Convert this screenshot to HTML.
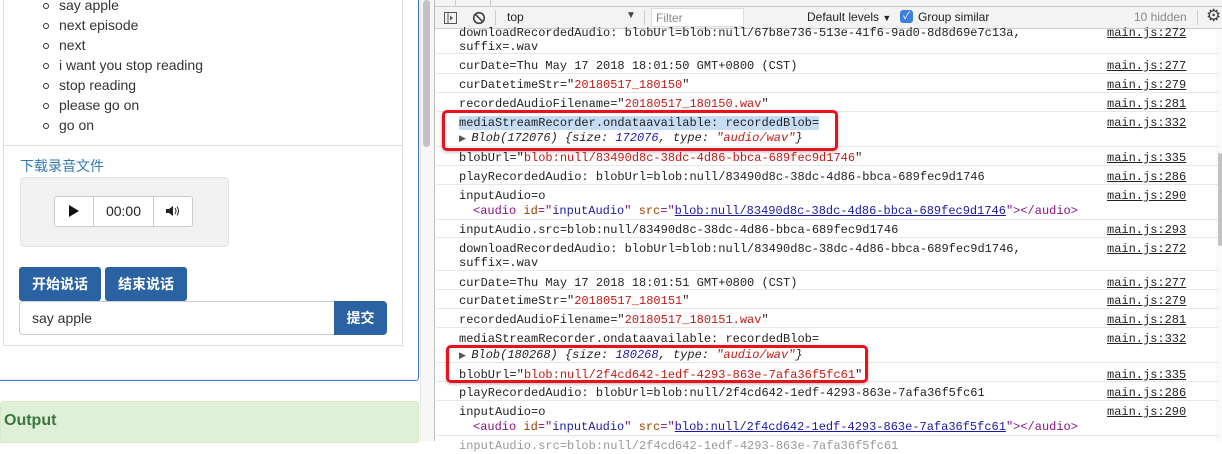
<!DOCTYPE html>
<html><head><meta charset="utf-8"><style>
*{margin:0;padding:0;box-sizing:border-box}
body{width:1222px;height:441px;overflow:hidden;background:#fff;position:relative;font-family:"Liberation Sans","Noto Sans CJK SC",sans-serif}
.a{position:absolute}
.li{position:absolute;left:59px;font-size:14px;color:#333;line-height:20px}
.bu{position:absolute;left:43px;width:6px;height:6px;border:1.3px solid #333;border-radius:50%}
.m{position:absolute;left:459px;font-family:"Liberation Mono",monospace;font-size:12px;color:#222;line-height:15px;white-space:pre;margin-top:2px}
.l{position:absolute;left:1107px;font-family:"Liberation Mono",monospace;font-size:12px;color:#222;text-decoration:underline;line-height:15px;margin-top:2px}
.h{position:absolute;left:436px;width:782px;height:1px;background:#e6e6e6}
.r{color:#c41a16}.b{color:#1a1aa6}.p{color:#881280}.o{color:#994500}.u{color:#1a1aa6;text-decoration:underline}.s{color:#1a1aa6}
.btn{position:absolute;background:#2a62a4;color:#fff;font-size:14px;font-weight:bold;text-align:center;border-radius:3px}
</style></head><body>
<div class="a" style="left:3px;top:-2px;width:400px;height:348px;border:1px solid #ddd;border-top:none"></div>
<div class="a" style="left:3px;top:145px;width:400px;height:1px;background:#ddd"></div>
<div class="a" style="left:0;top:-2px;width:419px;height:383px;border:1px solid #3a78c2;border-left:none;border-top:none;border-radius:0 0 3px 0"></div>
<div class="bu" style="top:3px"></div><div class="li" style="top:-5px">say apple</div>
<div class="bu" style="top:23px"></div><div class="li" style="top:15px">next episode</div>
<div class="bu" style="top:43px"></div><div class="li" style="top:35px">next</div>
<div class="bu" style="top:63px"></div><div class="li" style="top:55px">i want you stop reading</div>
<div class="bu" style="top:83px"></div><div class="li" style="top:75px">stop reading</div>
<div class="bu" style="top:103px"></div><div class="li" style="top:95px">please go on</div>
<div class="bu" style="top:123px"></div><div class="li" style="top:115px">go on</div>
<div class="a" style="left:20px;top:156px;font-size:14px;color:#337ab7;line-height:20px">下载录音文件</div>
<div class="a" style="left:20px;top:177px;width:209px;height:70px;background:#f1f1f1;border:1px solid #e3e3e3;border-radius:4px"></div>
<div class="a" style="left:54px;top:196px;width:139px;height:31px;background:#fff;border:1px solid #ccc;border-radius:3px"></div>
<div class="a" style="left:93px;top:197px;width:1px;height:29px;background:#ccc"></div>
<div class="a" style="left:153px;top:197px;width:1px;height:29px;background:#ccc"></div>
<svg class="a" style="left:68px;top:204px" width="12" height="14"><path d="M1 1L11 7L1 13Z" fill="#111"/></svg>
<div class="a" style="left:94px;top:203px;width:59px;text-align:center;font-size:14px;color:#222">00:00</div>
<svg class="a" style="left:166px;top:205px" width="14" height="12"><path d="M0 4H3L7 1V11L3 8H0Z" fill="#222"/><path d="M9 3Q11 6 9 9M11 1.5Q14 6 11 10.5" stroke="#222" fill="none" stroke-width="1"/></svg>
<div class="btn" style="left:19px;top:267px;width:82px;height:34px;line-height:34px">开始说话</div>
<div class="btn" style="left:105px;top:267px;width:82px;height:34px;line-height:34px">结束说话</div>
<div class="a" style="left:19px;top:301px;width:316px;height:34px;border:1px solid #ccc;border-radius:4px 0 0 4px;font-size:14px;color:#333;padding-left:12px;line-height:32px">say apple</div>
<div class="btn" style="left:334px;top:301px;width:53px;height:34px;line-height:34px;border-radius:0 4px 4px 0">提交</div>
<div class="a" style="left:0;top:401px;width:419px;height:42px;background:#dff0d8;border:1px solid #d6e9c6;border-radius:4px 4px 0 0"></div>
<div class="a" style="left:4px;top:412px;font-size:16px;font-weight:bold;color:#3c763d">Output</div>
<div class="a" style="left:420px;top:0;width:15px;height:441px;background:#f7f7f7;border-left:1px solid #e8e8e8"></div>
<div class="a" style="left:423px;top:0;width:7px;height:147px;background:#c2c2c2;border-radius:4px"></div>
<div class="a" style="left:434px;top:0;width:1px;height:441px;background:#bbb"></div>
<div class="a" style="left:435px;top:0;width:787px;height:7px;background:#f3f3f3;border-bottom:1px solid #ccc"></div>
<div class="a" style="left:455px;top:0;width:1px;height:7px;background:#ccc"></div>
<div class="a" style="left:490px;top:0;width:1px;height:7px;background:#ccc"></div>
<div class="a" style="left:435px;top:7px;width:787px;height:22px;background:#f3f3f3;border-bottom:1px solid #ccc"></div>
<svg class="a" style="left:443px;top:10px" width="16" height="16"><rect x="1.5" y="2.5" width="12" height="11" fill="none" stroke="#555"/><line x1="5" y1="3" x2="5" y2="13" stroke="#555"/><path d="M7 5.5L10 8L7 10.5Z" fill="#555"/></svg>
<svg class="a" style="left:472px;top:10px" width="16" height="16"><circle cx="7" cy="8" r="5.3" fill="none" stroke="#444" stroke-width="1.6"/><line x1="3.3" y1="4.3" x2="10.7" y2="11.7" stroke="#444" stroke-width="1.6"/></svg>
<div class="a" style="left:495px;top:10px;width:1px;height:15px;background:#ccc"></div>
<div class="a" style="left:507px;top:10px;font-size:12px;color:#222">top</div>
<div class="a" style="left:626px;top:10px;font-size:10px;color:#444">▼</div>
<div class="a" style="left:644px;top:10px;width:1px;height:15px;background:#ccc"></div>
<div class="a" style="left:651px;top:8px;width:93px;height:19px;background:#fff;border:1px solid #ddd;font-size:12px;color:#888;padding:2px 4px">Filter</div>
<div class="a" style="left:807px;top:10px;font-size:12px;color:#222">Default levels <span style="font-size:9px">▼</span></div>
<div class="a" style="left:900px;top:10px;width:13px;height:13px;background:#3b7fe0;border-radius:3px;color:#fff;font-size:10px;text-align:center;line-height:13px">✓</div>
<div class="a" style="left:918px;top:10px;font-size:12px;color:#222">Group similar</div>
<div class="a" style="left:1134px;top:10px;font-size:12px;color:#888">10 hidden</div>
<div class="a" style="left:1197px;top:10px;width:1px;height:15px;background:#ccc"></div>
<div class="a" style="left:1206px;top:6px;font-size:17px;color:#444">⚙</div>
<div class="a" style="left:1216px;top:29px;width:6px;height:412px;background:#fafafa"></div>
<div class="a" style="left:1218px;top:153px;width:4px;height:93px;background:#c2c2c2;border-radius:2px"></div>
<div class="m" style="top:24px">downloadRecordedAudio: blobUrl=blob:null/67b8e736-513e-41f6-9ad0-8d8d69e7c13a,</div><div class="l" style="top:24px">main.js:272</div>
<div class="m" style="top:38px">suffix=.wav</div>
<div class="h" style="top:53px"></div>
<div class="m" style="top:57px">curDate=Thu May 17 2018 18:01:50 GMT+0800 (CST)</div><div class="l" style="top:57px">main.js:277</div>
<div class="h" style="top:73px"></div>
<div class="m" style="top:76px">curDatetimeStr="<span class="r">20180517_180150</span>"</div><div class="l" style="top:76px">main.js:279</div>
<div class="h" style="top:92px"></div>
<div class="m" style="top:95px">recordedAudioFilename="<span class="r">20180517_180150.wav</span>"</div><div class="l" style="top:95px">main.js:281</div>
<div class="h" style="top:111px"></div>
<div class="m" style="top:114px"><span style="background:#c6dcf5">mediaStreamRecorder.ondataavailable: recordedBlob=</span></div><div class="l" style="top:114px">main.js:332</div>
<div class="m" style="top:129px"><span style="font-size:9px;color:#555">▶ </span><i>Blob(172076) {size: <span class="b">172076</span>, type: <span class="r">"audio/wav"</span>}</i></div>
<div class="h" style="top:146px"></div>
<div class="m" style="top:149px">blobUrl="<span class="r">blob:null/83490d8c-38dc-4d86-bbca-689fec9d1746</span>"</div><div class="l" style="top:149px">main.js:335</div>
<div class="h" style="top:165px"></div>
<div class="m" style="top:168px">playRecordedAudio: blobUrl=blob:null/83490d8c-38dc-4d86-bbca-689fec9d1746</div><div class="l" style="top:168px">main.js:286</div>
<div class="h" style="top:184px"></div>
<div class="m" style="top:187px">inputAudio=o</div><div class="l" style="top:187px">main.js:290</div>
<div class="m" style="top:202px;left:473px"><span class="p">&lt;audio</span> <span class="o">id</span><span class="p">="</span><span class="s">inputAudio</span><span class="p">"</span> <span class="o">src</span><span class="p">="</span><span class="u">blob:null/83490d8c-38dc-4d86-bbca-689fec9d1746</span><span class="p">"&gt;&lt;/audio&gt;</span></div>
<div class="h" style="top:219px"></div>
<div class="m" style="top:221px">inputAudio.src=blob:null/83490d8c-38dc-4d86-bbca-689fec9d1746</div><div class="l" style="top:221px">main.js:293</div>
<div class="h" style="top:237px"></div>
<div class="m" style="top:240px">downloadRecordedAudio: blobUrl=blob:null/83490d8c-38dc-4d86-bbca-689fec9d1746,</div><div class="l" style="top:240px">main.js:272</div>
<div class="m" style="top:254px">suffix=.wav</div>
<div class="h" style="top:270px"></div>
<div class="m" style="top:274px">curDate=Thu May 17 2018 18:01:51 GMT+0800 (CST)</div><div class="l" style="top:274px">main.js:277</div>
<div class="h" style="top:289px"></div>
<div class="m" style="top:292px">curDatetimeStr="<span class="r">20180517_180151</span>"</div><div class="l" style="top:292px">main.js:279</div>
<div class="h" style="top:308px"></div>
<div class="m" style="top:311px">recordedAudioFilename="<span class="r">20180517_180151.wav</span>"</div><div class="l" style="top:311px">main.js:281</div>
<div class="h" style="top:327px"></div>
<div class="m" style="top:330px">mediaStreamRecorder.ondataavailable: recordedBlob=</div><div class="l" style="top:330px">main.js:332</div>
<div class="m" style="top:346px"><span style="font-size:9px;color:#555">▶ </span><i>Blob(180268) {size: <span class="b">180268</span>, type: <span class="r">"audio/wav"</span>}</i></div>
<div class="h" style="top:362px"></div>
<div class="m" style="top:366px">blobUrl="<span class="r">blob:null/2f4cd642-1edf-4293-863e-7afa36f5fc61</span>"</div><div class="l" style="top:366px">main.js:335</div>
<div class="h" style="top:381px"></div>
<div class="m" style="top:384px">playRecordedAudio: blobUrl=blob:null/2f4cd642-1edf-4293-863e-7afa36f5fc61</div><div class="l" style="top:384px">main.js:286</div>
<div class="h" style="top:400px"></div>
<div class="m" style="top:403px">inputAudio=o</div><div class="l" style="top:403px">main.js:290</div>
<div class="m" style="top:418px;left:473px"><span class="p">&lt;audio</span> <span class="o">id</span><span class="p">="</span><span class="s">inputAudio</span><span class="p">"</span> <span class="o">src</span><span class="p">="</span><span class="u">blob:null/2f4cd642-1edf-4293-863e-7afa36f5fc61</span><span class="p">"&gt;&lt;/audio&gt;</span></div>
<div class="h" style="top:435px"></div>
<div class="m" style="top:437px;color:#999">inputAudio.src=blob:null/2f4cd642-1edf-4293-863e-7afa36f5fc61</div>
<div class="a" style="left:442px;top:110px;width:396px;height:41px;border:3px solid #e8121b;border-radius:5px;box-shadow:0 1px 3px rgba(0,0,0,.3)"></div>
<div class="a" style="left:446px;top:345px;width:422px;height:38px;border:3px solid #e8121b;border-radius:5px;box-shadow:0 1px 3px rgba(0,0,0,.3)"></div>
</body></html>
